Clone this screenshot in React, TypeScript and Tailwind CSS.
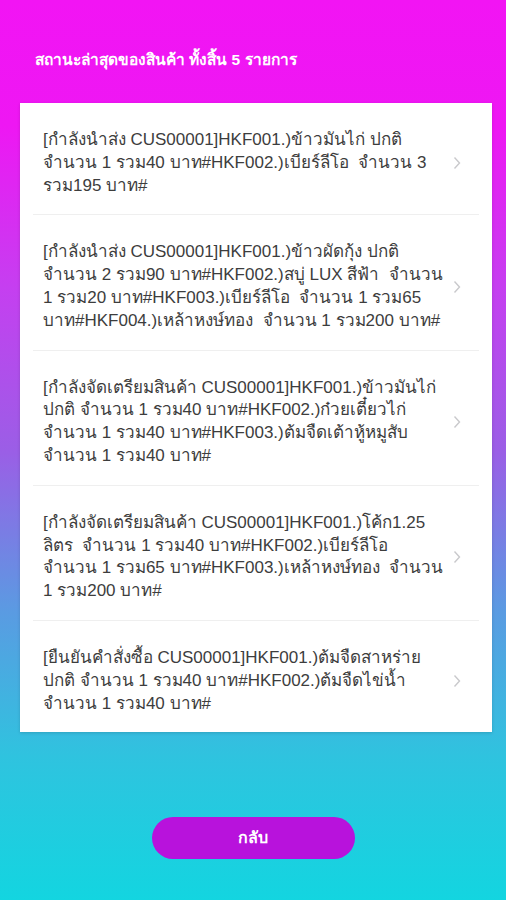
const items: string[][] = [
  [
    "[กำลังนำส่ง CUS00001]HKF001.)ข้าวมันไก่ ปกติ",
    "จำนวน 1 รวม40 บาท#HKF002.)เบียร์ลีโอ  จำนวน 3",
    "รวม195 บาท#",
  ],
  [
    "[กำลังนำส่ง CUS00001]HKF001.)ข้าวผัดกุ้ง ปกติ",
    "จำนวน 2 รวม90 บาท#HKF002.)สบู่ LUX สีฟ้า  จำนวน",
    "1 รวม20 บาท#HKF003.)เบียร์ลีโอ  จำนวน 1 รวม65",
    "บาท#HKF004.)เหล้าหงษ์ทอง  จำนวน 1 รวม200 บาท#",
  ],
  [
    "[กำลังจัดเตรียมสินค้า CUS00001]HKF001.)ข้าวมันไก่",
    "ปกติ จำนวน 1 รวม40 บาท#HKF002.)ก๋วยเตี๋ยวไก่",
    "จำนวน 1 รวม40 บาท#HKF003.)ต้มจืดเต้าหู้หมูสับ",
    "จำนวน 1 รวม40 บาท#",
  ],
  [
    "[กำลังจัดเตรียมสินค้า CUS00001]HKF001.)โค้ก1.25",
    "ลิตร  จำนวน 1 รวม40 บาท#HKF002.)เบียร์ลีโอ",
    "จำนวน 1 รวม65 บาท#HKF003.)เหล้าหงษ์ทอง  จำนวน",
    "1 รวม200 บาท#",
  ],
  [
    "[ยืนยันคำสั่งซื้อ CUS00001]HKF001.)ต้มจืดสาหร่าย",
    "ปกติ จำนวน 1 รวม40 บาท#HKF002.)ต้มจืดไข่น้ำ",
    "จำนวน 1 รวม40 บาท#",
  ],
];

function Chevron() {
  return (
    <svg width="8" height="14" viewBox="0 0 8 14" className="ml-auto shrink-0">
      <path d="M1.5 1.5 L6.5 7 L1.5 12.5" fill="none" stroke="#c9c9cc" strokeWidth="1.4" />
    </svg>
  );
}

function Row({ lines, last }: { lines: string[]; last: boolean }) {
  return (
    <div className={`mx-[13px] ${last ? "" : "border-b border-[#efefef]"}`}>
      <div className="flex items-center pb-[17px] pl-[10px] pr-[18px] pt-[26px]">
        <p className="whitespace-pre text-[17px] leading-[22.8px] text-[#3d3d3d]">
          {lines.map((l, i) => (
            <span key={i} className="block">
              {l}
            </span>
          ))}
        </p>
        <Chevron />
      </div>
    </div>
  );
}

export default function App() {
  return (
    <div
      className="flex min-h-[900px] w-full flex-col bg-[linear-gradient(180deg,#f214f4_0%,#ee17f3_14%,#c53ff0_32%,#9b5ee6_50%,#5a9be2_68%,#2fc3df_84%,#13d5e0_100%)]"
      style={{ fontFamily: '"Liberation Sans", "Noto Sans", sans-serif' }}
    >
      <h1 className="px-[35px] pt-[49px] text-[15.5px] font-bold leading-[22px] text-white">
        สถานะล่าสุดของสินค้า ทั้งสิ้น 5 รายการ
      </h1>
      <div className="ml-[20px] mr-[14px] mt-[32px] bg-white shadow-[0_1px_3px_rgba(0,0,0,0.15)]">
        {items.map((l, i) => (
          <Row key={i} lines={l} last={i === items.length - 1} />
        ))}
      </div>
      <div className="flex justify-center pt-[85px]">
        <button className="h-[42px] w-[203px] rounded-full bg-[#b812dc] text-[16px] font-bold text-white">
          กลับ
        </button>
      </div>
    </div>
  );
}
